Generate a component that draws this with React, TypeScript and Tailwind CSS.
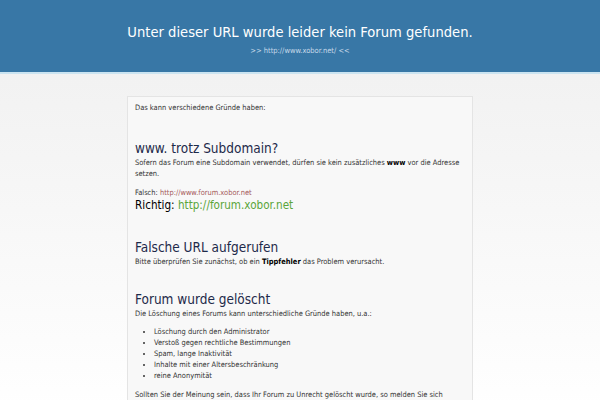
import React from "react";

export default function App() {
  const font = { fontFamily: '"DejaVu Sans Condensed", "DejaVu Sans", Verdana, sans-serif' };
  return (
    <div className="min-h-[400px] bg-gradient-to-b from-[#efefef] to-white [font-stretch:condensed]" style={font}>
      <div className="bg-[#3877a6] border-b-2 border-[#cbe4f1] h-[74px] flex flex-col items-center pt-[22px]">
        <h1 className="text-white text-[14.6px] leading-[20px]">Unter dieser URL wurde leider kein Forum gefunden.</h1>
        <div className="text-[#c5d8e8] text-[7.5px] leading-[10px] mt-[4px]">&gt;&gt; http://www.xobor.net/ &lt;&lt;</div>
      </div>
      <div className="mx-auto mt-[22px] w-[346px] bg-[#f8f8f8] border border-[#e4e4e4] px-[7px] pt-[5px] pb-4 text-[7.45px] leading-[11px] text-[#333]">
        <p>Das kann verschiedene Gründe haben:</p>
        <h2 className="text-[13.5px] leading-[18px] text-[#1e2a4a] mt-[26px]">www. trotz Subdomain?</h2>
        <p>Sofern das Forum eine Subdomain verwendet, dürfen sie kein zusätzliches <b className="text-black">www</b> vor die Adresse setzen.</p>
        <p className="mt-[8px]">Falsch: <span className="text-[#a55a5a]">http://www.forum.xobor.net</span></p>
        <p className="text-[11.6px] leading-[15px] text-black">Richtig: <span className="text-[#5aa53a]">http://forum.xobor.net</span></p>
        <h2 className="text-[13.5px] leading-[18px] text-[#1e2a4a] mt-[25px]">Falsche URL aufgerufen</h2>
        <p>Bitte überprüfen Sie zunächst, ob ein <b className="text-black">Tippfehler</b> das Problem verursacht.</p>
        <h2 className="text-[13.5px] leading-[18px] text-[#1e2a4a] mt-[23px]">Forum wurde gelöscht</h2>
        <p>Die Löschung eines Forums kann unterschiedliche Gründe haben, u.a.:</p>
        <ul className="list-disc pl-[19px] mt-[7px]">
          <li>Löschung durch den Administrator</li>
          <li>Verstoß gegen rechtliche Bestimmungen</li>
          <li>Spam, lange Inaktivität</li>
          <li>Inhalte mit einer Altersbeschränkung</li>
          <li>reine Anonymität</li>
        </ul>
        <p className="mt-[8px]">Sollten Sie der Meinung sein, dass Ihr Forum zu Unrecht gelöscht wurde, so melden Sie sich</p>
      </div>
    </div>
  );
}
